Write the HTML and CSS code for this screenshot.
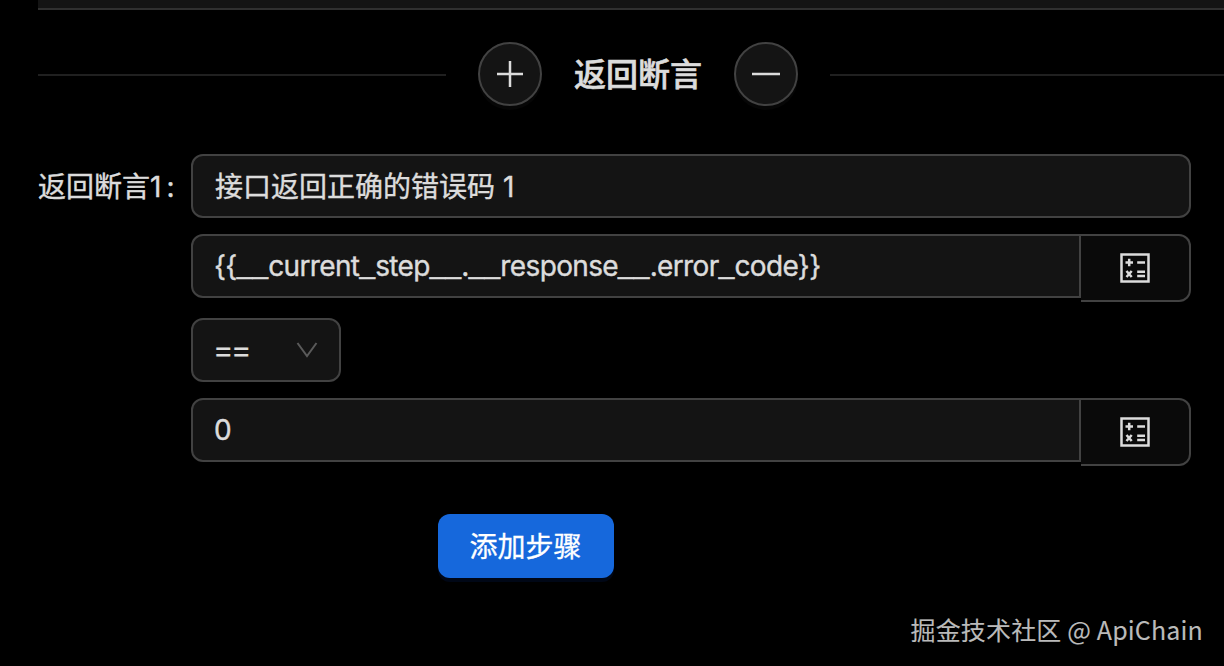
FILE: index.html
```html
<!DOCTYPE html>
<html lang="zh-CN">
<head>
<meta charset="utf-8">
<title>返回断言</title>
<link rel="stylesheet" href="styles.css">
</head>
<body>
<main class="page">
  <div class="panel-edge"></div>
  <div class="divider">
    <span class="line line-left"></span>
    <button class="circle" aria-label="plus"><svg width="32" height="32" viewBox="0 0 32 32"><path d="M16 3v26M3 16h26"/></svg></button>
    <h2 class="title">返回断言</h2>
    <button class="circle" aria-label="minus"><svg width="32" height="32" viewBox="0 0 32 32"><path d="M2 16h28"/></svg></button>
    <span class="line line-right"></span>
  </div>
  <div class="form">
    <div class="label"><span>返回断言1</span><span class="colon">:</span></div>
    <div class="fields">
      <div class="box">接口返回正确的错误码 1</div>
      <div class="group">
        <div class="box joined"><span class="expr">{{<span class="us">__</span>current<span class="us">_</span>step<span class="us">__</span>.<span class="us">__</span>response<span class="us">__</span>.error<span class="us">_</span>code}}</span></div>
        <div class="addon"><svg class="calc" width="30" height="30" viewBox="0 0 30 30"><path d="M1.5 1.5h27v27h-27z"/><path d="M5.5 9.500h7.500M9.200 5.800v7.400M17.200 9.500h7.800M17.200 18.800h7.800M17.200 23h7.800M6.500 18l5.200 6M11.700 18l-5.200 6"/></svg></div>
      </div>
      <div class="box select"><span class="op">==</span><svg class="arrow" width="22" height="18" viewBox="0 0 22 18"><path d="M1.500 2L11 15L20.500 2"/></svg></div>
      <div class="group">
        <div class="box joined"><span class="zero">0</span></div>
        <div class="addon"><svg class="calc" width="30" height="30" viewBox="0 0 30 30"><path d="M1.5 1.5h27v27h-27z"/><path d="M5.5 9.500h7.500M9.200 5.800v7.400M17.200 9.500h7.800M17.200 18.800h7.800M17.200 23h7.800M6.500 18l5.200 6M11.700 18l-5.200 6"/></svg></div>
      </div>
    </div>
  </div>
  <button class="primary">添加步骤</button>
  <footer class="credit">掘金技术社区 @ ApiChain</footer>
</main>
</body>
</html>
```
FILE: styles.css
```css
* { box-sizing: border-box; }
body { margin: 0; background: #000; }
.page {
  width: 1224px;
  height: 666px;
  overflow: hidden;
  display: flex;
  flex-direction: column;
  color: #dcdcdc;
  font: 28px/44px Inter, "Noto Sans CJK SC", sans-serif;
  -webkit-text-stroke: 0.4px currentColor;
}
.panel-edge {
  flex: none;
  height: 10px;
  margin-left: 38px;
  background: #141414;
  border-bottom: 2px solid #303030;
}
.divider {
  display: flex;
  align-items: center;
  gap: 32px;
  height: 64px;
  margin: 32px 0 0 38px;
}
.line { height: 2px; margin-top: 1px; background: #202020; }
.line-left { width: 408px; }
.line-right { flex: 1; }
.circle {
  display: flex;
  align-items: center;
  justify-content: center;
  width: 64px;
  height: 64px;
  padding: 0;
  border: 2px solid #424242;
  border-radius: 50%;
  background: #141414;
  box-shadow: 0 4px 0 rgba(255, 255, 255, 0.025);
}
.circle svg { fill: none; stroke: #dcdcdc; stroke-width: 2.5; }
.title {
  margin: 0;
  padding-top: 2px;
  font-size: 32px;
  font-weight: 500;
  line-height: 48px;
  -webkit-text-stroke-width: 0.6px;
}
.form { display: flex; margin: 48px 0 0 38px; }
.label {
  display: flex;
  width: 153px;
  height: 64px;
  align-items: center;
  padding-top: 2px;
}
.colon { margin-left: 5px; }
.fields { display: flex; flex-direction: column; gap: 16px; width: 1000px; }
.box {
  display: flex;
  align-items: center;
  height: 64px;
  padding: 2px 22px 0;
  border: 2px solid #424242;
  border-radius: 12px;
  background: #141414;
  white-space: pre;
}
.group { display: flex; align-items: flex-start; height: 68px; }
.joined { width: 890px; padding-top: 0; border-radius: 12px 0 0 12px; }
.expr { margin-left: -1px; letter-spacing: -0.63px; }
.us {
  font-family: "Liberation Sans", Arial, sans-serif;
  letter-spacing: 0.2px;
  line-height: 1;
  vertical-align: 3px;
}
.zero { margin-left: -1px; }
.addon {
  display: flex;
  align-items: center;
  justify-content: center;
  width: 110px;
  height: 68px;
  border: 2px solid #424242;
  border-left: 0;
  border-radius: 0 12px 12px 0;
  background: #0a0a0a;
}
.calc { fill: none; stroke: #dcdcdc; stroke-width: 2.5; }
.select { width: 150px; padding: 0 21px 0 20px; justify-content: space-between; }
.op { font-size: 31px; letter-spacing: -2.5px; -webkit-text-stroke-width: 0.2px; }
.arrow { fill: none; stroke: #5a5a5a; stroke-width: 2; }
.primary {
  width: 176px;
  height: 64px;
  margin: 48px 0 0 438px;
  padding: 2px 1px 0 0;
  border: 0;
  border-radius: 12px;
  background: #1668dc;
  color: #fff;
  font: inherit;
  -webkit-text-stroke: 0.3px #fff;
  box-shadow: 0 4px 0 rgba(0, 60, 180, 0.12);
}
.credit {
  margin: 31px 21px 0 0;
  text-align: right;
  color: #bababa;
  font: 25px/40px "Noto Sans CJK SC", sans-serif;
  letter-spacing: 0.16px;
  -webkit-text-stroke-width: 0.1px;
}
```
